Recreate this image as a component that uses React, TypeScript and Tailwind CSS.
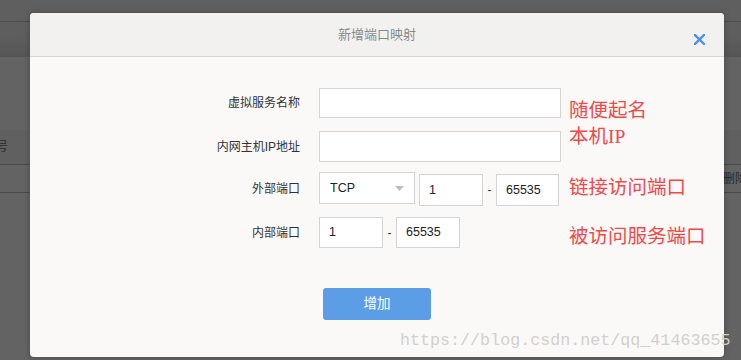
import { ReactNode } from "react";

const sans = "font-['Liberation_Sans','Noto_Sans_CJK_SC',sans-serif]";
const note = "font-['Liberation_Serif','Noto_Sans_CJK_SC',serif] text-[19.5px] leading-none text-[#f24848] whitespace-nowrap";

const Box = ({ w, h, children }: { w: string; h: string; children?: ReactNode }) => (
  <div className={`${w} ${h} flex items-center bg-white border border-[#d4d4d4] px-[9px] text-[12.5px] text-[#222]`}>
    {children}
  </div>
);

const Row = ({
  label,
  children,
  noteText,
  noteClass,
  className,
}: {
  label: string;
  children: ReactNode;
  noteText: string;
  noteClass: string;
  className: string;
}) => (
  <div className={`flex items-center ${className}`}>
    <div className="w-[289px] pr-[19px] text-right text-[12px] text-[#333]">{label}</div>
    <div className="w-[250px] flex items-center">{children}</div>
    <span className={`${note} relative ${noteClass}`}>{noteText}</span>
  </div>
);

export default function App() {
  return (
    <div className={`relative w-[741px] h-[360px] overflow-hidden bg-[#636363] ${sans}`}>
      {/* page behind the overlay */}
      <div className="h-[22px] bg-[#5e5f5e] border-b border-[#4c4d4c]" />
      <div className="h-[35px] bg-gradient-to-b from-[#5e5f5e] via-[#5c5d5c] to-[#545554]" />
      <div className="h-[73px]" />
      <div className="h-[35px] flex items-center bg-[#606060] border-b border-[#4a4a4a] text-[12px] text-[#2a2a2a]">
        <span className="-ml-[4px]">号</span>
      </div>
      <div className="h-[28px] flex items-center justify-end border-b border-[#4a4a4a] text-[12px] text-[#2a2a2a]">
        <span className="-mr-[6px]">删除</span>
      </div>

      {/* dialog */}
      <div className="absolute left-[30px] top-[13px] w-[694px] h-[344px] rounded-[4px] bg-[#faf9f8] shadow-[0_0_6px_rgba(0,0,0,0.25)] overflow-hidden">
        <div className="relative h-[44px] flex items-center justify-center bg-[#f2f1f0] border-b border-[#d6d6d6]">
          <span className="text-[13px] text-[#8a8a8a]">新增端口映射</span>
          <svg className="absolute right-[19px] top-[21px]" width="11" height="11" viewBox="0 0 11 11">
            <path d="M1 1L10 10M10 1L1 10" stroke="#4b8ef2" strokeWidth="2.4" strokeLinecap="square" />
          </svg>
        </div>

        <div className="pt-[31px]">
          <Row label="虚拟服务名称" noteText="随便起名" noteClass="top-[8px]" className="">
            <Box w="w-[242px]" h="h-[30px]" />
          </Row>
          <Row label="内网主机IP地址" noteText="本机IP" noteClass="-top-[10px]" className="mt-[13px]">
            <Box w="w-[242px]" h="h-[31px]" />
          </Row>
          <div className="flex items-start mt-[10px]">
            <div className="w-[289px] pr-[19px] text-right text-[12px] text-[#333] mt-[8px]">外部端口</div>
            <div className="w-[250px] flex items-start">
              <div className="relative w-[96px] h-[32px] flex items-center bg-white border border-[#d4d4d4] pl-[10px] text-[12.5px] text-[#222]">
                TCP
                <svg className="absolute right-[10px] top-[13px]" width="9" height="5" viewBox="0 0 9 5">
                  <path d="M0 0H9L4.5 5Z" fill="#bdbdbd" />
                </svg>
              </div>
              <div className="ml-[4px] mt-[2px] flex items-center">
                <Box w="w-[64px]" h="h-[32px]">1</Box>
                <span className="w-[13px] text-center text-[12px] text-[#333]">-</span>
                <Box w="w-[63px]" h="h-[32px]">65535</Box>
              </div>
            </div>
            <span className={`${note} mt-[6px]`}>链接访问端口</span>
          </div>
          <Row label="内部端口" noteText="被访问服务端口" noteClass="top-[4px]" className="mt-[11px]">
            <Box w="w-[64px]" h="h-[31px]">1</Box>
            <span className="w-[13px] text-center text-[12px] text-[#333]">-</span>
            <Box w="w-[64px]" h="h-[31px]">65535</Box>
          </Row>

          <button className="ml-[293px] mt-[40px] w-[108px] h-[32px] rounded-[3px] bg-[#5b9ee6] text-white text-[13.5px]">
            增加
          </button>
        </div>
      </div>

      {/* watermark */}
      <div className="absolute left-[400px] top-[328px] font-['Liberation_Mono',monospace] text-[16.7px] text-[#d3d0ca] whitespace-nowrap">
        https://blog.csdn.net/qq_41463655
      </div>
    </div>
  );
}
